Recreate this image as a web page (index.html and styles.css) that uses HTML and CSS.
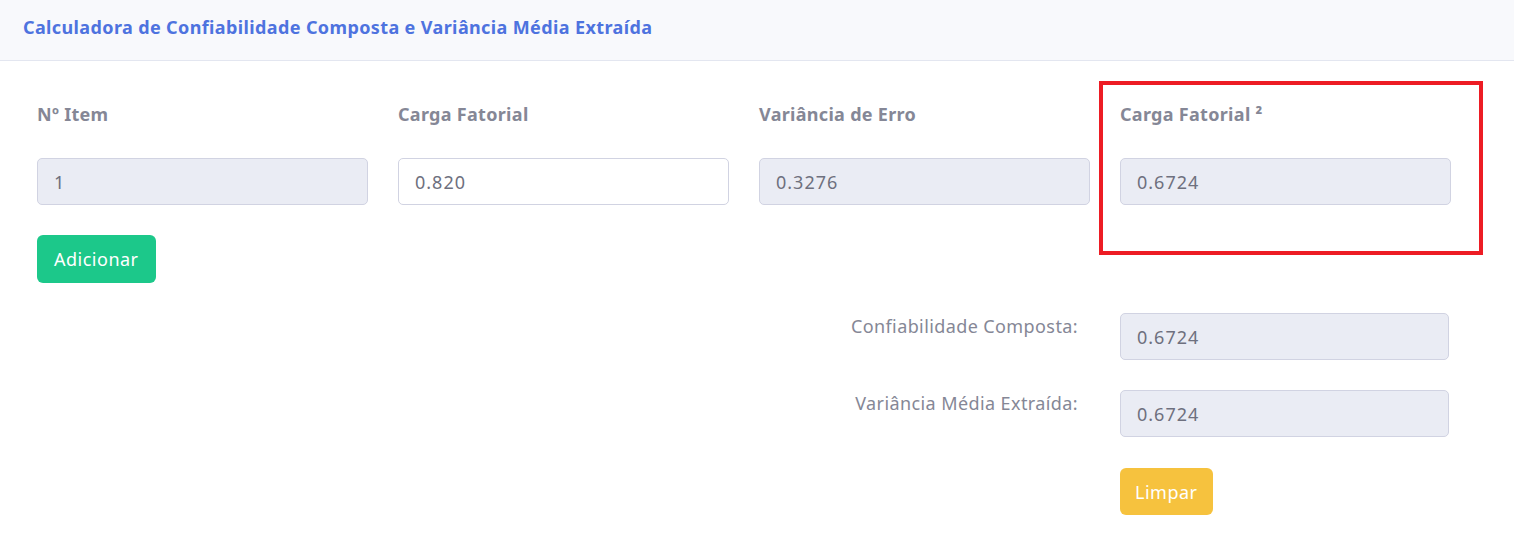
FILE: index.html
```html
<!DOCTYPE html>
<html lang="pt">
<head>
<meta charset="utf-8">
<title>Calculadora</title>
<link rel="stylesheet" href="styles.css">
</head>
<body>
<div class="card">
  <div class="card-header">
    <h6 class="card-title">Calculadora de Confiabilidade Composta e Variância Média Extraída</h6>
  </div>
  <div class="card-body">
    <div class="form-row">
      <div class="field">
        <label class="field-label">Nº Item</label>
        <input class="form-control" type="text" value="1" disabled>
      </div>
      <div class="field">
        <label class="field-label">Carga Fatorial</label>
        <input class="form-control" type="text" value="0.820">
      </div>
      <div class="field">
        <label class="field-label">Variância de Erro</label>
        <input class="form-control" type="text" value="0.3276" disabled>
      </div>
      <div class="field">
        <label class="field-label">Carga Fatorial ²</label>
        <input class="form-control" type="text" value="0.6724" disabled>
        <span class="highlight-box"></span>
      </div>
    </div>
    <div class="actions">
      <button class="btn btn-success" type="button">Adicionar</button>
    </div>
    <div class="results">
      <div class="result-row">
        <label class="result-label">Confiabilidade Composta:</label>
        <input class="form-control result-input" type="text" value="0.6724" disabled>
      </div>
      <div class="result-row">
        <label class="result-label">Variância Média Extraída:</label>
        <input class="form-control result-input" type="text" value="0.6724" disabled>
      </div>
      <div class="result-row">
        <div class="result-btn"><button class="btn btn-warning" type="button">Limpar</button></div>
      </div>
    </div>
  </div>
</div>
</body>
</html>
```
FILE: styles.css
```css
* { box-sizing: border-box; }
html, body { margin: 0; padding: 0; background: #fff; }
body {
  font-family: "Noto Sans", "Open Sans", sans-serif;
  color: #858796;
  width: 1514px;
  height: 559px;
  overflow: hidden;
}
.card { background: #fff; }
.card-header {
  height: 61px;
  background: #f8f9fc;
  border-bottom: 1px solid #e3e6f0;
  padding: 0 23px 7px;
  display: flex;
  align-items: center;
}
.card-title {
  margin: 0;
  font-size: 18px;
  font-weight: 700;
  letter-spacing: 0.38px;
  color: #4e73df;
}
.card-body { padding: 41px 37px 0; }
.form-row {
  display: grid;
  grid-template-columns: repeat(4, 331px);
  column-gap: 30px;
}
.field { display: flex; flex-direction: column; position: relative; }
.field-label {
  display: block;
  font-size: 18px;
  font-weight: 700;
  line-height: 24px;
  letter-spacing: 0.3px;
  color: #858796;
  margin-bottom: 32px;
}
.form-control {
  display: block;
  width: 100%;
  height: 47px;
  padding: 0 16px;
  font-family: inherit;
  font-size: 18px;
  letter-spacing: 1px;
  color: #6e707e;
  background: #fff;
  border: 1px solid #d1d3e2;
  border-radius: 5px;
  outline: none;
}
.form-control:disabled { background: #eaecf4; color: #6e707e; opacity: 1; -webkit-text-fill-color: #6e707e; }
.highlight-box {
  position: absolute;
  left: -21px;
  top: -21px;
  width: 384px;
  height: 174px;
  border: 4px solid #ed1c24;
  pointer-events: none;
}
.actions { margin-top: 30px; }
.btn {
  font-family: inherit;
  font-size: 18px;
  line-height: 24px;
  letter-spacing: 0.5px;
  color: #fff;
  border: 0;
  border-radius: 6px;
  height: 48px;
  padding: 0 17px;
  cursor: pointer;
}
.btn-success { background: #1cc88a; }
.btn-warning { background: #f6c23e; height: 47px; padding: 0 15px; margin-top: 1px; }
.results { margin-top: 30px; display: flex; flex-direction: column; row-gap: 30px; }
.result-row {
  display: flex;
  justify-content: flex-end;
  padding-right: 28px;
  column-gap: 42px;
}
.result-label {
  font-size: 18px;
  font-weight: 400;
  letter-spacing: 0.4px;
  color: #858796;
  text-align: right;
  padding-top: 1px;
  line-height: 24px;
}
.result-input { width: 329px; }
.result-btn { width: 329px; }
```
